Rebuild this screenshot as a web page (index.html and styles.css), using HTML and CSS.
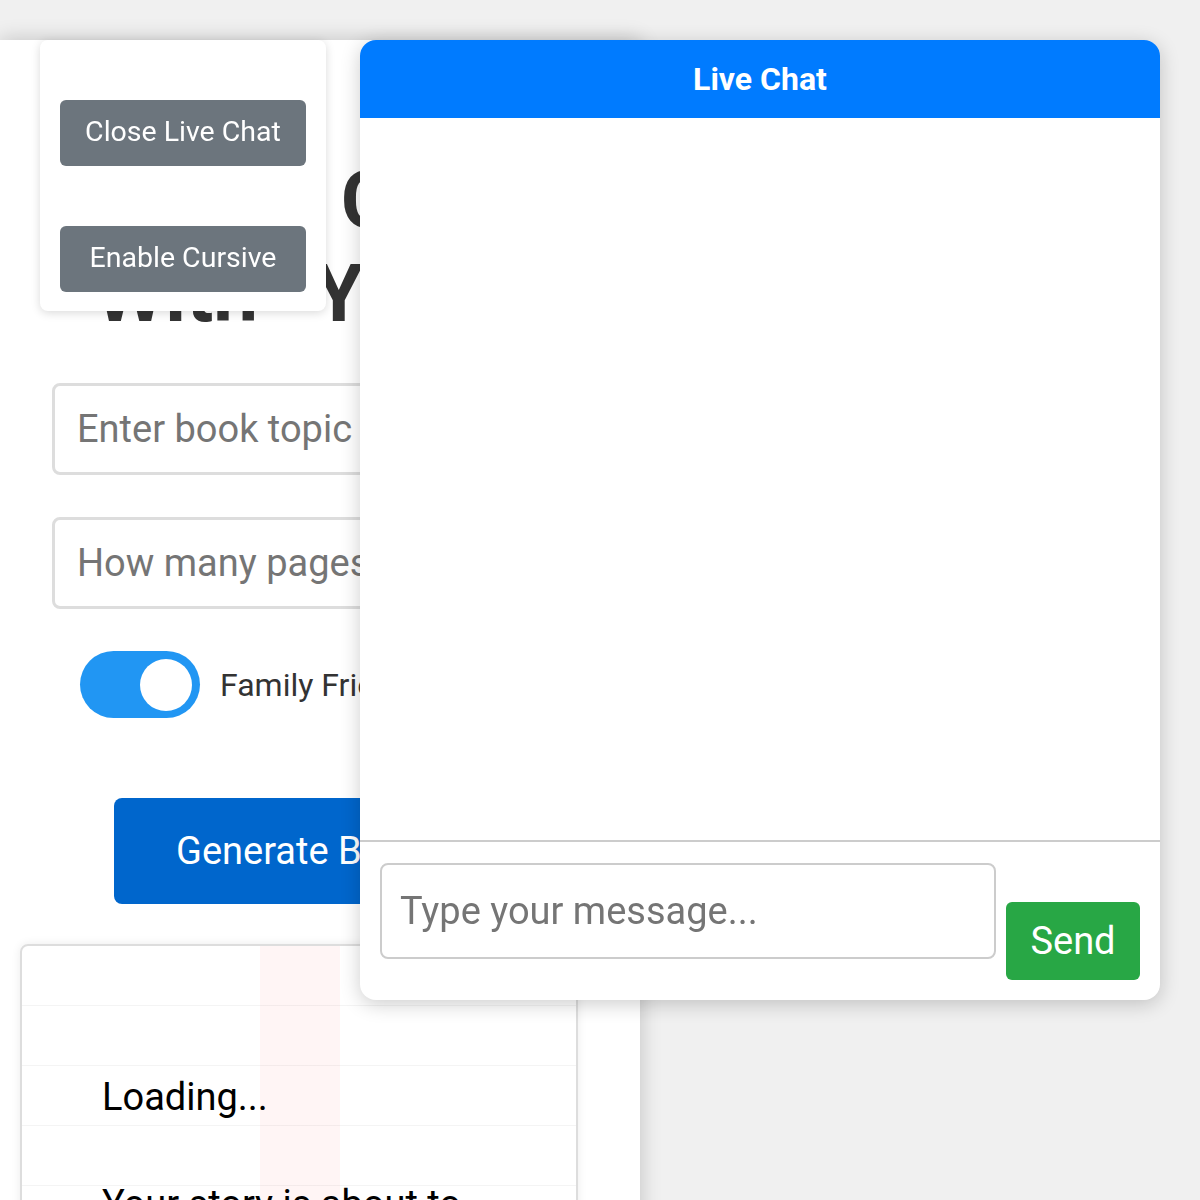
FILE: index.html
```html
<!DOCTYPE html>
<html lang="en">
<head>
    <meta charset="UTF-8">
    <meta name="viewport" content="width=device-width, initial-scale=1.0">
    <title>Book Generator</title>
    <link rel="stylesheet" href="styles.css">
</head>
<body>
    <main class="container">
        <h1 class="title">Write Custom<br>With Your Ideas</h1>

        <input type="text" class="field" placeholder="Enter book topic">
        <input type="number" class="field" placeholder="How many pages?">

        <label class="toggle-row">
            <input type="checkbox" class="toggle-input" checked>
            <span class="toggle"></span>
            <span class="toggle-label">Family Friendly</span>
        </label>

        <button class="generate-btn">Generate Book</button>

        <div class="story">
            <p class="story-text first">Loading...</p>
            <p class="story-text">Your story is about to begin, hold tight while the pages are written.</p>
        </div>
    </main>

    <div class="controls">
        <button class="control-btn">Close Live Chat</button>
        <button class="control-btn">Enable Cursive</button>
    </div>

    <div class="chat">
        <div class="chat-header">Live Chat</div>
        <div class="chat-messages"></div>
        <div class="chat-footer">
            <input type="text" class="chat-input" placeholder="Type your message...">
            <button class="send-btn">Send</button>
        </div>
    </div>
</body>
</html>
```

FILE: styles.css
```css
body {
    font-family: Roboto, "Noto Sans", sans-serif;
    background-color: #f0f0f0;
    color: #333;
    margin: 0;
    padding: 0;
}

.container {
    background-color: #fff;
    width: 640px;
    min-height: 1300px;
    margin-top: 40px;
    box-shadow: 0 0 20px rgba(0, 0, 0, 0.2);
    overflow: hidden;
}

.title {
    font-size: 80px;
    font-weight: 700;
    color: #333;
    margin: 0 0 42px;
    padding: 114px 0 0 95px;
    white-space: nowrap;
    word-spacing: 36px;
    line-height: 1.17;
}

.field {
    display: block;
    box-sizing: border-box;
    width: 536px;
    height: 92px;
    margin: 0 0 42px 52px;
    padding: 0 22px;
    border: 3px solid #ddd;
    border-radius: 8px;
    font-family: Roboto, sans-serif;
    font-size: 38px;
    color: #333;
}

.field::placeholder {
    color: #757575;
}

.toggle-row {
    display: flex;
    align-items: center;
    gap: 20px;
    margin-left: 80px;
    height: 67px;
}

.toggle-input {
    display: none;
}

.toggle {
    position: relative;
    width: 120px;
    height: 67px;
    border-radius: 34px;
    background-color: #2196f3;
}

.toggle::after {
    content: "";
    position: absolute;
    top: 8px;
    right: 8px;
    width: 52px;
    height: 52px;
    border-radius: 50%;
    background-color: #fff;
}

.toggle-label {
    font-size: 32px;
    color: #333;
}

.generate-btn {
    display: block;
    margin: 80px 0 0 114px;
    height: 106px;
    padding: 0 62px;
    border: none;
    border-radius: 8px;
    background-color: #0066cc;
    color: #fff;
    font-family: Roboto, sans-serif;
    font-size: 38px;
}

.story {
    margin: 40px 62px 0 20px;
    padding: 0 80px 40px;
    border: 2px solid #ddd;
    border-radius: 8px;
    box-shadow: 0 0 10px rgba(0, 0, 0, 0.08);
    background-image:
        linear-gradient(to right, transparent 238px, rgba(255, 0, 0, 0.04) 238px, rgba(255, 0, 0, 0.04) 318px, transparent 318px),
        repeating-linear-gradient(to bottom, transparent 0, transparent 59px, #f4f4f4 59px, #f4f4f4 60px);
}

.story-text {
    font-size: 38px;
    line-height: 60px;
    color: #000;
    margin: 0 0 47px;
}

.story-text.first {
    margin-top: 121px;
}

.controls {
    position: fixed;
    top: 40px;
    left: 40px;
    width: 246px;
    padding: 0 20px 19px;
    background-color: #fff;
    border-radius: 8px;
    box-shadow: 0 2px 10px rgba(0, 0, 0, 0.15);
}

.control-btn {
    display: block;
    width: 100%;
    height: 66px;
    margin-top: 60px;
    padding: 0 0 4px;
    border: none;
    border-radius: 6px;
    background-color: #6c757d;
    color: #fff;
    font-family: Roboto, sans-serif;
    font-size: 28.5px;
}

.chat {
    position: fixed;
    top: 40px;
    right: 40px;
    width: 800px;
    height: 960px;
    display: flex;
    flex-direction: column;
    background-color: #fff;
    border-radius: 16px;
    box-shadow: 0 4px 20px rgba(0, 0, 0, 0.2);
    overflow: hidden;
}

.chat-header {
    height: 78px;
    display: flex;
    align-items: center;
    justify-content: center;
    background-color: #007bff;
    color: #fff;
    font-size: 32px;
    font-weight: 700;
}

.chat-messages {
    flex: 1;
}

.chat-footer {
    display: flex;
    align-items: flex-end;
    gap: 10px;
    padding: 21px 20px 20px;
    border-top: 2px solid #ccc;
}

.chat-input {
    flex: 1;
    box-sizing: border-box;
    height: 96px;
    margin-bottom: 21px;
    padding: 0 18px;
    border: 2px solid #ccc;
    border-radius: 8px;
    font-family: Roboto, sans-serif;
    font-size: 38px;
    color: #333;
}

.chat-input::placeholder {
    color: #757575;
}

.send-btn {
    width: 134px;
    height: 78px;
    border: none;
    border-radius: 6px;
    background-color: #28a745;
    color: #fff;
    font-family: Roboto, sans-serif;
    font-size: 38px;
}
```
